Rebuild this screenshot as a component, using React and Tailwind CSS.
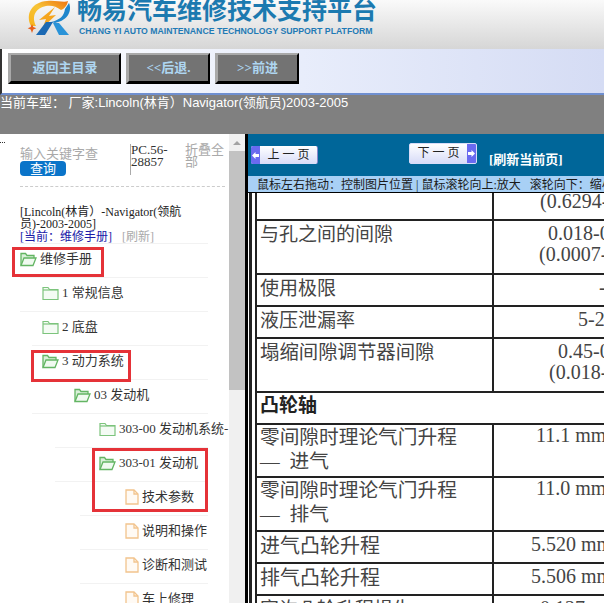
import React from 'react';

const cjk = "font-['Liberation_Serif','Noto_Sans_CJK_SC',serif]";
const sans = "font-['Liberation_Sans','Noto_Sans_CJK_SC',sans-serif]";

const FolderClosed = () => (
  <svg width="17" height="15" viewBox="0 0 17 15" fill="none" stroke="#7cc47c" strokeWidth="1.2" className="shrink-0">
    <path d="M1 13.5V1.5h5l1.5 2H16v10z" fill="#f4fbf4" />
    <path d="M1 4h15" />
  </svg>
);

const FolderOpen = () => (
  <svg width="17" height="15" viewBox="0 0 17 15" fill="none" stroke="#63b563" strokeWidth="1.3" className="shrink-0">
    <path d="M1 13.5V1.5h4.5l1.5 2h7V6" fill="#d9f0d9" />
    <path d="M1 13.5L4 6h12l-3 7.5z" fill="#f0faf0" />
  </svg>
);

const FileIcon = () => (
  <svg width="14" height="16" viewBox="0 0 14 16" fill="none" stroke="#f2c48d" strokeWidth="1.3" className="shrink-0">
    <path d="M1 1h8l4 4v10H1z" fill="#fffaf4" />
    <path d="M9 1v4h4" />
  </svg>
);

const Logo = () => (
  <svg width="47" height="36" viewBox="0 0 47 36" className="shrink-0">
    <defs>
      <linearGradient id="lg1" x1="0" y1="1" x2="1" y2="0">
        <stop offset="0" stopColor="#f7b21c" />
        <stop offset="0.5" stopColor="#f7c436" />
        <stop offset="1" stopColor="#ee7412" />
      </linearGradient>
    </defs>
    <path d="M6 26C0 14 7 2 22 1c9-1 17 2 21 0-1 5-4 8-7 9-5-4-10-5-15-4C11 8 6 16 11 26z" fill="url(#lg1)" />
    <path d="M30 7L14 20l7-1-3 8 13-12-7 1z" fill="#f5a51d" />
    <path d="M44 3c3 7 0 17-14 20l-4-1c9-2 13-6 14-13z" fill="#1f86cc" />
    <path d="M21 22h7l-8 13h-9z" fill="#1b69b3" />
    <path d="M28 23h6l10 12H34z" fill="#2a93d8" />
    <path d="M7 24l1.3 3 3 1.3-3 1.3L7 33l-1.3-3.4-3-1.3 3-1.3z" fill="#e8601c" />
  </svg>
);

const PageArrow = ({ flip }) => (
  <span className="w-[9px] h-full shrink-0 bg-[#6a6af0] flex items-center justify-center">
    <svg width="7" height="7" viewBox="0 0 7 7" fill="#fff" className={flip ? 'rotate-180' : ''}>
      <path d="M0 3.5L3.5 0v2H7v3H3.5v2z" />
    </svg>
  </span>
);

const NavButton = ({ children, className }) => (
  <button className={`h-[31px] bg-[#737373] border-t-[2px] border-l-[3px] border-t-[#a9a9a9] border-l-[#a9a9a9] border-b-[3px] border-r-[2px] border-b-black border-r-black text-[#aed6f1] text-[13px] font-bold ${cjk} ${className}`}>
    {children}
  </button>
);

const treeRows = [
  { label: '维修手册', indent: 'pl-[20px]', line: 'ml-[20px]', Icon: FolderOpen },
  { label: '1 常规信息', indent: 'pl-[42px]', line: 'ml-[20px]', Icon: FolderClosed },
  { label: '2 底盘', indent: 'pl-[42px]', line: 'ml-[20px]', Icon: FolderClosed },
  { label: '3 动力系统', indent: 'pl-[42px]', line: 'ml-[32px]', Icon: FolderOpen },
  { label: '03 发动机', indent: 'pl-[74px]', line: 'ml-[32px]', Icon: FolderOpen },
  { label: '303-00 发动机系统-', indent: 'pl-[99px]', line: 'ml-[32px]', Icon: FolderClosed },
  { label: '303-01 发动机', indent: 'pl-[99px]', line: 'ml-[55px]', Icon: FolderOpen },
  { label: '技术参数', indent: 'pl-[125px]', line: 'ml-[55px]', Icon: FileIcon },
  { label: '说明和操作', indent: 'pl-[125px]', line: 'ml-[80px]', Icon: FileIcon },
  { label: '诊断和测试', indent: 'pl-[125px]', line: 'ml-[80px]', Icon: FileIcon },
  { label: '车上修理', indent: 'pl-[125px]', line: 'ml-[80px]', Icon: FileIcon },
];

const Highlight = ({ className }) => (
  <div className={`absolute border-[3px] border-[#e53238] pointer-events-none ${className}`} />
);

const specRows = [
  { h: 'h-[28px]', left: '', right: '(0.6294-', rightPl: 'pl-[46px]', shift: '-mt-[4px]' },
  { h: 'h-[54px]', left: '与孔之间的间隙', right: '0.018-0', second: '(0.0007-', secondMl: '-ml-[9px]', rightPl: 'pl-[54px]' },
  { h: 'h-[32px]', left: '使用极限', right: '-', rightPl: 'pl-[105px]' },
  { h: 'h-[32px]', left: '液压泄漏率', right: '5-2', rightPl: 'pl-[84px]' },
  { h: 'h-[54px]', size: 'text-[19.4px]', left: '塌缩间隙调节器间隙', right: '0.45-0', second: '(0.018-', secondMl: '-ml-[9px]', rightPl: 'pl-[64px]' },
  { h: 'h-[32px]', title: '凸轮轴' },
  { h: 'h-[53px]', size: 'text-[19.7px]', left: '零间隙时理论气门升程', leftNext: '—\u00a0 进气', right: '11.1 mm', rightPl: 'pl-[42px]', shift: '-mt-[2px]' },
  { h: 'h-[54px]', size: 'text-[19.7px]', left: '零间隙时理论气门升程', leftNext: '—\u00a0 排气', right: '11.0 mm', rightPl: 'pl-[42px]', shift: '-mt-[2px]' },
  { h: 'h-[32px]', size: 'text-[20px]', left: '进气凸轮升程', right: '5.520 mm', rightPl: 'pl-[37px]' },
  { h: 'h-[32px]', size: 'text-[20px]', left: '排气凸轮升程', right: '5.506 mm', rightPl: 'pl-[37px]' },
  { h: 'h-[32px]', left: '容许凸轮升程损失', right: '0.127 mm', rightPl: 'pl-[46px]' },
];

export default function App() {
  return (
    <div className={`w-[604px] h-[603px] overflow-hidden flex flex-col bg-white ${cjk}`}>
      {/* 顶部 logo */}
      <header className="h-[49px] shrink-0 bg-gradient-to-b from-[#fafafa] to-[#d6d6d6] flex items-start pl-[25px] overflow-hidden">
        <Logo />
        <div className="ml-[5px] -mt-[6px]">
          <div className={`text-[#1c7ab0] text-[25px] leading-[32px] font-bold whitespace-nowrap ${sans}`}>畅易汽车维修技术支持平台</div>
          <div className={`text-[#1f7ab5] text-[8.7px] leading-[10px] font-bold whitespace-nowrap ml-[2px] ${sans}`}>CHANG YI AUTO MAINTENANCE TECHNOLOGY SUPPORT PLATFORM</div>
        </div>
      </header>

      <nav className="h-[46px] shrink-0 bg-gradient-to-r from-white via-[#e8edfb] to-[#d5dcf4] border-b-[2px] border-b-[#6f8fd0] border-l-[2px] border-l-[#333] flex items-start gap-[5px] pl-[6px] pt-[4px]">
        <NavButton className="w-[113px]">返回主目录</NavButton>
        <NavButton className="w-[84px]">&lt;&lt;后退.</NavButton>
        <NavButton className="w-[84px]">&gt;&gt;前进</NavButton>
      </nav>

      <div className={`h-[39px] shrink-0 bg-[#808080] text-white text-[13px] leading-[16px] whitespace-pre ${sans}`}>
        当前车型： 厂家:Lincoln(林肯）Navigator(领航员)2003-2005
      </div>

      <div className="flex-1 flex min-h-0">
        {/* 左侧目录 */}
        <aside className="w-[229px] shrink-0 overflow-hidden relative pt-[10px]">
          <div className="absolute left-0 top-[8px] w-[5px] border-t border-dotted border-t-[#333]" />
          <div className="flex h-[31px] ml-[20px]">
            <div className="w-[110px] pt-[3px]">
              <div className="text-[#a9a9a9] text-[13px] leading-[14px] whitespace-nowrap">输入关键字查</div>
              <div className="w-[46px] h-[15px] rounded-[4px] bg-[#0a74c9] text-white text-[13px] leading-[15px] text-center">查询</div>
            </div>
            <div className="w-[55px] border-l border-l-[#aaa] text-[#333] text-[13px] leading-[12px]">PC.56-<br />28857</div>
            <div className="w-[40px] text-[#a9a9a9] text-[13px] leading-[12px]">折叠全部</div>
          </div>
          <div className="ml-[20px] mr-[4px] border-t border-dashed border-t-[#ccc] mt-[11px]" />
          <div className="ml-[20px] mt-[19px] w-[170px] text-[#222] text-[12px] leading-[12px]">
            [Lincoln(林肯）-Navigator(领航员)-2003-2005]
          </div>
          <div className="ml-[20px] text-[12px] leading-[14px] h-[14px] whitespace-nowrap">
            <span className="text-[#1a1aa8]">[当前：维修手册]</span>
            <span className="text-[#aaa] ml-[10px]">[刷新]</span>
          </div>
          <div className="relative -mt-[1px]">
            {treeRows.map(({ label, indent, line, Icon }) => (
              <div key={label} className="h-[34px] flex flex-col">
                <div className={`${line} mr-[21px] border-t border-t-[#f2f2f2]`} />
                <div className={`flex-1 flex items-center gap-[3px] pb-[3px] whitespace-nowrap text-[13px] text-[#333] ${indent}`}>
                  <Icon />
                  <span>{label}</span>
                </div>
              </div>
            ))}
            <Highlight className="left-[12px] top-[4px] w-[92px] h-[30px]" />
            <Highlight className="left-[31px] top-[107px] w-[100px] h-[32px]" />
            <Highlight className="left-[92px] top-[205px] w-[116px] h-[64px]" />
          </div>
        </aside>

        {/* 滚动条 */}
        <div className="w-[16px] shrink-0 bg-[#f0f0f0] flex flex-col items-center">
          <div className="h-[17px] w-full flex items-center justify-center">
            <div className="w-0 h-0 border-x-[4px] border-x-transparent border-b-[4px] border-b-[#a3a3a3]" />
          </div>
          <div className="w-full h-[239px] bg-[#c2c2c2]" />
        </div>

        <div className="w-[3px] shrink-0 bg-black" />

        {/* 右侧图片 */}
        <main className="flex-1 min-w-0 flex flex-col overflow-hidden">
          <div className="h-[42px] shrink-0 bg-[#006699] flex items-start pl-[3px]">
            <button className="mt-[12px] w-[67px] h-[18px] rounded-[2px] overflow-hidden bg-gradient-to-b from-white to-[#d8dcf8] border-r border-r-[#8888cc] text-[12px] leading-[18px] text-[#222] flex">
              <PageArrow />
              <span className="flex-1 text-center">上 一 页</span>
            </button>
            <button className="ml-[91px] mt-[9px] w-[68px] h-[21px] rounded-[2px] overflow-hidden bg-gradient-to-b from-white to-[#d8dcf8] border border-[#d8dcf8] text-[12px] leading-[18px] text-[#222] flex">
              <span className="flex-1 text-center">下 一 页</span>
              <PageArrow flip />
            </button>
            <span className="ml-[12px] mt-[18px] text-white text-[13px] leading-[16px] font-bold whitespace-nowrap">[刷新当前页]</span>
          </div>
          <div className="h-[17px] shrink-0 bg-[#a8d0f5] text-[#1a1a1a] text-[12px] leading-[18px] pl-[9px] whitespace-nowrap border-b border-b-black overflow-hidden">
            鼠标左右拖动：控制图片位置 | 鼠标滚轮向上:放大&nbsp;&nbsp;&nbsp;滚轮向下：缩小
          </div>
          <div className="flex-1 min-h-0 bg-white pl-[1px] overflow-hidden">
            <div className="border-l-[3px] border-l-[#222] pl-[3px] h-full">
              <div className="border-l-[2px] border-l-[#222] w-[400px]">
                {specRows.map((row, i) => (
                  <div key={i} className={`${row.h} border-b-[2px] border-b-[#222] flex text-[#444] overflow-hidden`}>
                    {row.title ? (
                      <div className="pl-[3px] pt-[1px] text-[19px] leading-[24px] font-bold text-[#222]">{row.title}</div>
                    ) : (
                      <>
                        <div className={`w-[237px] shrink-0 border-r-[2px] border-r-[#222] pl-[3px] pt-[2px] leading-[24px] whitespace-nowrap ${row.size || 'text-[19px]'}`}>
                          <div className={row.shift}>
                            <div>{row.left}</div>
                            {row.leftNext && <div>{row.leftNext}</div>}
                          </div>
                        </div>
                        <div className={`flex-1 pt-[2px] text-[20px] leading-[21px] whitespace-nowrap ${row.rightPl}`}>
                          <div className={row.shift}>
                            <div>{row.right}</div>
                            {row.second && <div className={row.secondMl}>{row.second}</div>}
                          </div>
                        </div>
                      </>
                    )}
                  </div>
                ))}
              </div>
            </div>
          </div>
        </main>
      </div>
    </div>
  );
}
